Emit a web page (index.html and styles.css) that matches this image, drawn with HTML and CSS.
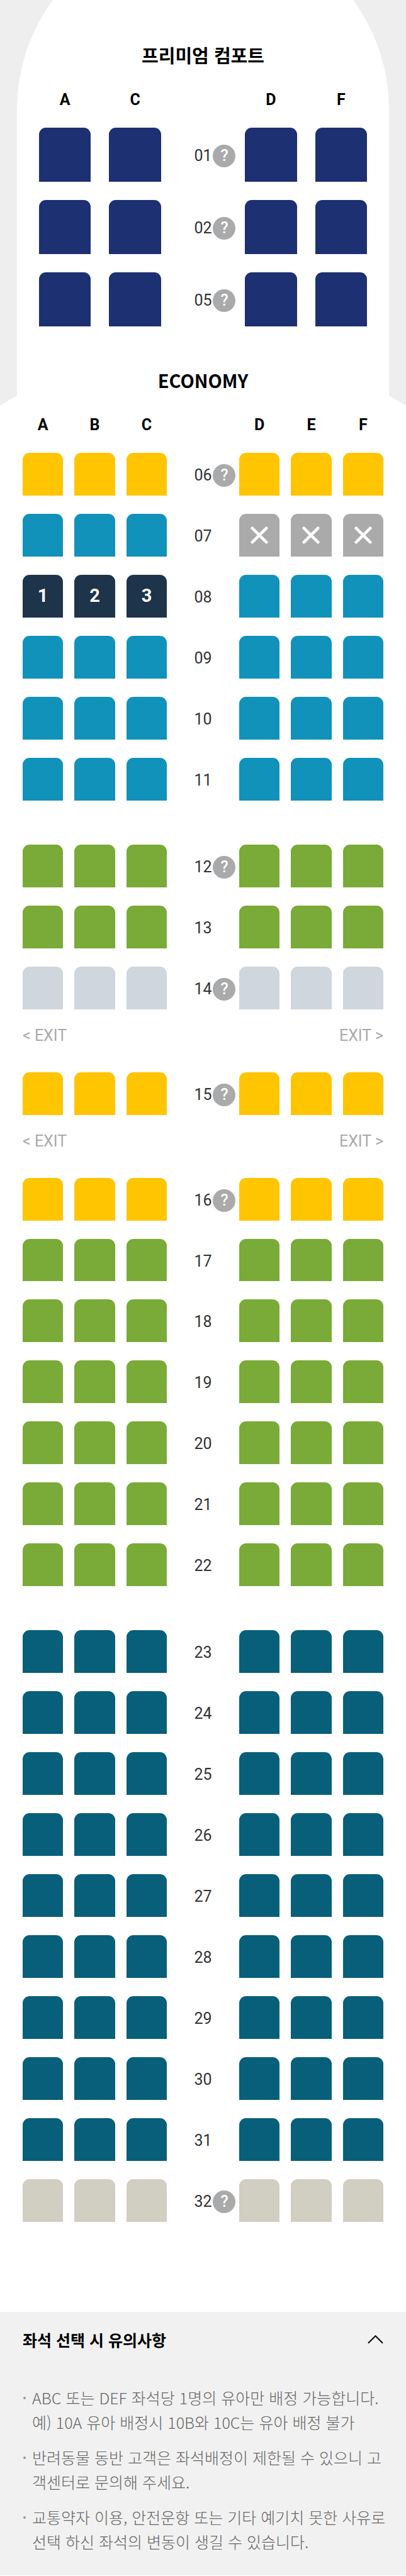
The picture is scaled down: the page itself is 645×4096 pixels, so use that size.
FILE: index.html
```html
<!DOCTYPE html>
<html lang="ko">
<head>
<meta charset="utf-8">
<meta name="viewport" content="width=device-width, initial-scale=1">
<title>좌석 선택</title>
<link rel="stylesheet" href="styles.css">
</head>
<body>
<main class="cabin">
  <svg class="hull" viewBox="0 0 720 720" aria-hidden="true">
    <path d="M30 702V195A330 330 0 0 1 690 195V702L720 720H0Z"/>
  </svg>
  <section class="zone premium">
    <h2 class="zone-title">프리미엄 컴포트</h2>
    <div class="row letters"><span>A</span><span>C</span><span></span><span>D</span><span>F</span></div>
    <div class="rows" data-cols="ACDF" data-rows="01?navy 02?navy 05?navy"></div>
  </section>
  <section class="zone economy">
    <h2 class="zone-title">ECONOMY</h2>
    <div class="row letters"><span>A</span><span>B</span><span>C</span><span></span><span>D</span><span>E</span><span>F</span></div>
    <div class="rows" data-cols="ABCDEF" data-rows="06?yellow 07-cyan 08-cyan 09-cyan 10-cyan 11-cyan"></div>
    <div class="spacer"></div>
    <div class="rows" data-cols="ABCDEF" data-rows="12?green 13-green 14?silver"></div>
    <div class="exits"><span>&lt; EXIT</span><span>EXIT &gt;</span></div>
    <div class="rows" data-cols="ABCDEF" data-rows="15?yellow"></div>
    <div class="exits"><span>&lt; EXIT</span><span>EXIT &gt;</span></div>
    <div class="rows" data-cols="ABCDEF" data-rows="16?yellow 17-green 18-green 19-green 20-green 21-green 22-green"></div>
    <div class="spacer"></div>
    <div class="rows" data-cols="ABCDEF" data-rows="23-teal 24-teal 25-teal 26-teal 27-teal 28-teal 29-teal 30-teal 31-teal 32?sand"></div>
  </section>
</main>
<section class="notice">
  <h2 class="notice-heading">
    <button class="notice-toggle" type="button" aria-expanded="true">
      <span>좌석 선택 시 유의사항</span>
      <svg class="chevron" viewBox="0 0 26 14" aria-hidden="true"><path d="M1 13L13 1L25 13"/></svg>
    </button>
  </h2>
  <ul class="notice-list">
    <li>ABC 또는 DEF 좌석당 1명의 유아만 배정 가능합니다.<br>예) 10A 유아 배정시 10B와 10C는 유아 배정 불가</li>
    <li>반려동물 동반 고객은 좌석배정이 제한될 수 있으니 고객센터로 문의해 주세요.</li>
    <li>교통약자 이용, 안전운항 또는 기타 예기치 못한 사유로 선택 하신 좌석의 변동이 생길 수 있습니다.</li>
  </ul>
</section>
<script src="seats.js"></script>
</body>
</html>
```
FILE: styles.css
```css
* {
  box-sizing: border-box;
}

body {
  margin: 0;
  background: #fff;
  color: #000;
  font-family: Roboto, "Noto Sans CJK KR", sans-serif;
}

button {
  border: 0;
  padding: 0;
  font: inherit;
  color: inherit;
  background: none;
  cursor: pointer;
}

.cabin {
  position: relative;
  padding: 65px 0 143px;
}

.hull {
  position: absolute;
  z-index: -1;
  top: 0;
  left: 0;
  width: 100%;
  background: #eee;
  fill: #fff;
}

.zone-title {
  margin: 0 0 35px;
  font: 700 29px/44px "Noto Sans CJK KR", sans-serif;
  text-align: center;
}

.premium {
  padding: 0 62px 63px;
}

.economy {
  padding: 0 36px;
}

.row {
  display: grid;
}

.premium .row {
  grid-template-columns: 92fr 92fr 84fr 92fr 92fr;
  column-gap: 29px;
}

.economy .row {
  grid-template-columns: 72fr 72fr 72fr 88fr 72fr 72fr 72fr;
  column-gap: 18px;
}

.letters {
  margin-bottom: 29px;
  font-size: 25px;
  font-weight: 700;
  line-height: 30px;
  text-align: center;
}

.rows {
  display: grid;
  row-gap: 29px;
}

.seat {
  display: flex;
  align-items: center;
  justify-content: center;
  border-radius: 11px 11px 0 0;
  color: #fff;
  font-size: 29px;
  font-weight: 700;
  line-height: 1;
}

.premium .seat {
  aspect-ratio: 92 / 96;
}

.economy .seat {
  aspect-ratio: 72 / 76;
}

.navy { background: #1c3072; }
.yellow { background: #ffc500; }
.cyan { background: #1092bb; }
.green { background: #7aaa37; }
.silver { background: #cfd6dd; }
.teal { background: #085f7a; }
.sand { background: #d1cec2; }
.picked { background: #1d344a; }
.taken { background: #aaa; }

.cross {
  width: 28px;
  height: 28px;
  fill: none;
  stroke: #fff;
  stroke-width: 5;
  stroke-linecap: round;
}

.aisle {
  position: relative;
  display: flex;
  align-items: center;
  justify-content: center;
  padding-top: 4px;
  color: #333;
  font-size: 25px;
  line-height: 36px;
}

.help {
  position: absolute;
  left: calc(50% + 16px);
  width: 36px;
  height: 36px;
  border-radius: 50%;
  background: #aaa;
  color: #fff;
  font-weight: 500;
  text-align: center;
}

.spacer {
  height: 70px;
}

.exits {
  display: flex;
  justify-content: space-between;
  padding: 28px 0 44px;
  color: #aaa;
  font-size: 25px;
  line-height: 28px;
}

.notice {
  padding: 25px 36px 34px;
  background: #f1f1f1;
  font-family: "Noto Sans CJK KR", sans-serif;
  font-size: 25px;
  line-height: 39px;
}

.notice-heading {
  margin: 0 0 53px;
  font-size: 25px;
  font-weight: 700;
}

.notice-toggle {
  display: flex;
  align-items: center;
  justify-content: space-between;
  width: 100%;
  line-height: 39px;
}

.chevron {
  width: 25px;
  height: 14px;
  fill: none;
  stroke: #000;
  stroke-width: 2;
}

.notice-list {
  display: grid;
  gap: 17px;
  margin: 0 -8px 0 0;
  padding: 0;
  list-style: none;
  color: #666;
  font-weight: 300;
}

.notice-list li {
  position: relative;
  padding-left: 15px;
  word-break: break-all;
}

.notice-list li::before {
  content: "";
  position: absolute;
  top: 18px;
  left: 1px;
  width: 4px;
  height: 4px;
  border-radius: 50%;
  background: #999;
}
```
FILE: seats.js
```js
const picked = { "08A": 1, "08B": 2, "08C": 3 };
const taken = ["07D", "07E", "07F"];
const cross = '<svg class="cross" viewBox="0 0 30 30" aria-hidden="true"><path d="M3 3L27 27M27 3L3 27"/></svg>';

function seat(id, colour) {
  if (taken.includes(id)) {
    return `<button class="seat taken" type="button" aria-label="${id}" disabled>${cross}</button>`;
  }
  if (picked[id]) {
    return `<button class="seat picked" type="button" aria-pressed="true">${picked[id]}</button>`;
  }
  return `<button class="seat ${colour}" type="button" aria-label="${id}"></button>`;
}

for (const block of document.querySelectorAll(".rows")) {
  const cols = [...block.dataset.cols];
  const half = cols.length / 2;
  block.innerHTML = block.dataset.rows.split(" ").map((entry) => {
    const number = entry.slice(0, 2);
    const colour = entry.slice(3);
    const help = entry[2] === "?" ? '<button class="help" type="button">?</button>' : "";
    const seats = cols.map((col) => seat(number + col, colour));
    return `<div class="row">${seats.slice(0, half).join("")}<div class="aisle"><span>${number}</span>${help}</div>${seats.slice(half).join("")}</div>`;
  }).join("");
}
```
